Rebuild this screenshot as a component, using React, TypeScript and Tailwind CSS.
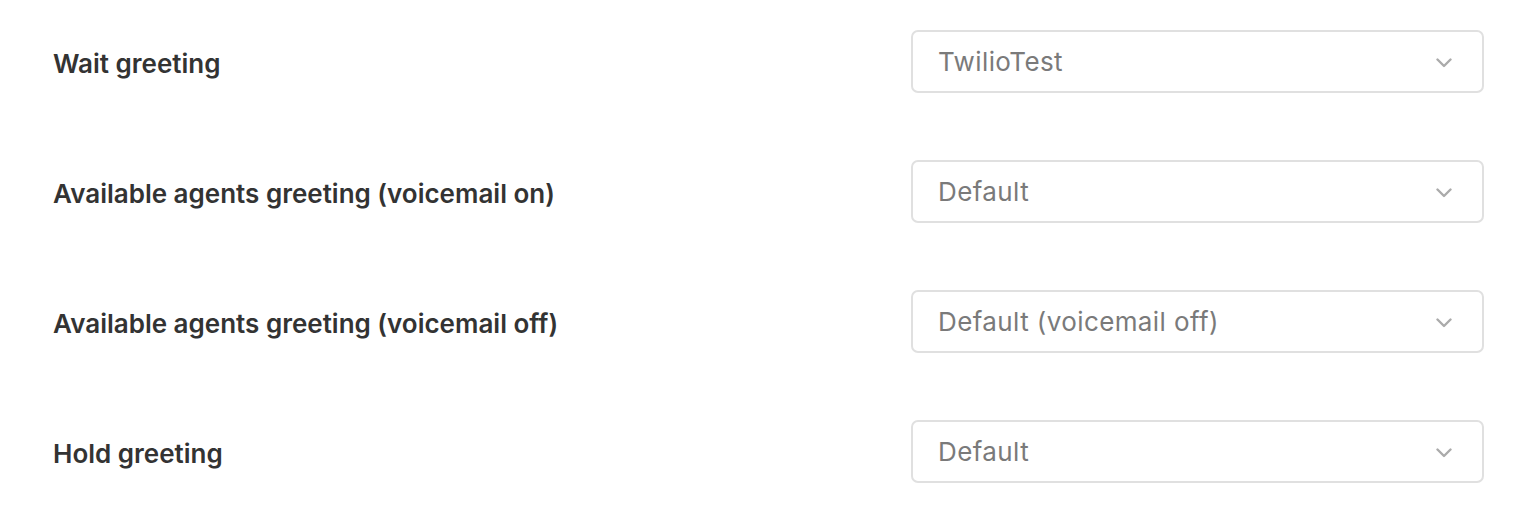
const rows = [
  { label: "Wait greeting", value: "TwilioTest" },
  { label: "Available agents greeting (voicemail on)", value: "Default" },
  { label: "Available agents greeting (voicemail off)", value: "Default (voicemail off)" },
  { label: "Hold greeting", value: "Default" },
];

function Chevron() {
  return (
    <svg width="16" height="10" viewBox="0 0 16 10" fill="none" className="mt-[3px]">
      <path
        d="M1.5 1.5 8 8l6.5-6.5"
        stroke="#ababab"
        strokeWidth="2.4"
        strokeLinecap="round"
        strokeLinejoin="round"
      />
    </svg>
  );
}

function Select({ value }: { value: string }) {
  return (
    <button
      type="button"
      className="flex h-[63px] w-[573px] items-center justify-between rounded-[7px] border-2 border-[#e0e0e0] bg-white pl-[25px] pr-[30px] text-left"
    >
      <span className="font-['Inter',sans-serif] text-[26px] tracking-[0.4px] text-[#7a7a7a]">
        {value}
      </span>
      <Chevron />
    </button>
  );
}

export default function App() {
  return (
    <div className="min-h-screen bg-white pl-[53px] pr-[48px] pt-[30px]">
      <div className="flex flex-col gap-[67px]">
        {rows.map((row) => (
          <div key={row.label} className="flex items-center justify-between">
            <span className="pt-[4px] font-['Inter',sans-serif] text-[26px] font-semibold text-[#333333]">
              {row.label}
            </span>
            <Select value={row.value} />
          </div>
        ))}
      </div>
    </div>
  );
}
